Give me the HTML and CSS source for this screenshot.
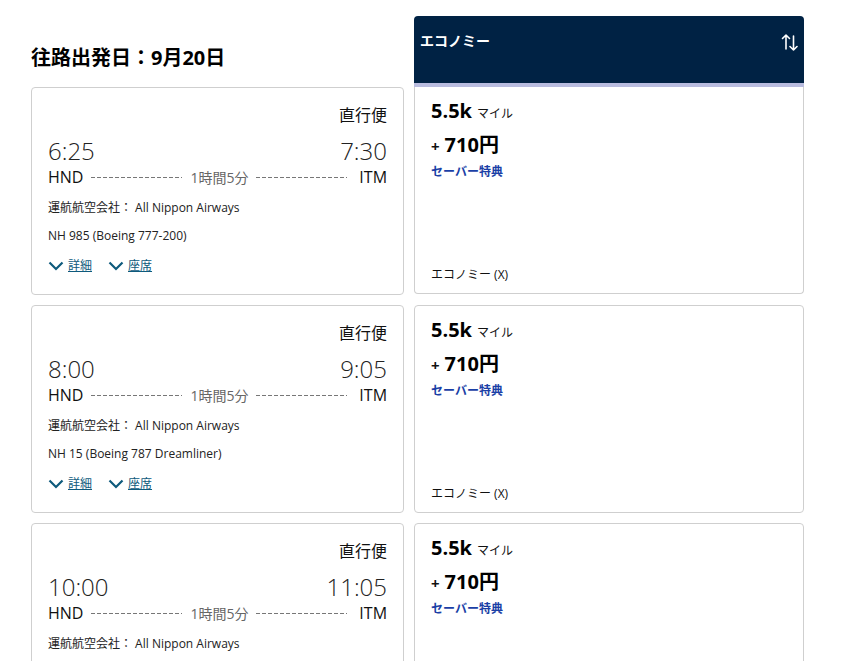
FILE: index.html
```html
<!DOCTYPE html>
<html lang="ja">
<head>
<meta charset="utf-8">
<title>往路出発日</title>
<link rel="stylesheet" href="styles.css">
</head>
<body>
<div class="page">
  <div class="row head-row">
    <h1 class="title">往路出発日：9月20日</h1>
    <div class="cabin-head">
      <span class="cabin-name">エコノミー</span>
      <svg class="sort-icon" width="18" height="18" viewBox="0 0 18 18" fill="none" stroke="#fff" stroke-width="1.6" stroke-linecap="round" stroke-linejoin="round">
        <path d="M5 16V2M1.5 5.5L5 2l3.5 3.5"/>
        <path d="M12.5 3v14M9 13.5l3.5 3.5 3.5-3.5"/>
      </svg>
    </div>
  </div>

  <div class="row">
    <div class="card flight">
      <div class="direct">直行便</div>
      <div class="times"><span>6:25</span><span>7:30</span></div>
      <div class="route"><span>HND</span><i class="dash"></i><span class="dur">1時間5分</span><i class="dash"></i><span>ITM</span></div>
      <div class="meta">運航航空会社： All Nippon Airways</div>
      <div class="meta fno">NH 985 (Boeing 777-200)</div>
      <div class="links">
        <a class="link" href="#"><svg class="chev" width="16" height="10" viewBox="0 0 16 10"><path d="M1.5 1.5L8 8l6.5-6.5" fill="none" stroke="#0e5a7c" stroke-width="2.2"/></svg><span>詳細</span></a>
        <a class="link" href="#"><svg class="chev" width="16" height="10" viewBox="0 0 16 10"><path d="M1.5 1.5L8 8l6.5-6.5" fill="none" stroke="#0e5a7c" stroke-width="2.2"/></svg><span>座席</span></a>
      </div>
    </div>
    <div class="card price">
      <div class="miles"><b>5.5k</b><span>マイル</span></div>
      <div class="yen"><span class="plus">+</span><b>710円</b></div>
      <div class="saver">セーバー特典</div>
      <div class="fare">エコノミー (X)</div>
    </div>
  </div>

  <div class="row">
    <div class="card flight">
      <div class="direct">直行便</div>
      <div class="times"><span>8:00</span><span>9:05</span></div>
      <div class="route"><span>HND</span><i class="dash"></i><span class="dur">1時間5分</span><i class="dash"></i><span>ITM</span></div>
      <div class="meta">運航航空会社： All Nippon Airways</div>
      <div class="meta fno">NH 15 (Boeing 787 Dreamliner)</div>
      <div class="links">
        <a class="link" href="#"><svg class="chev" width="16" height="10" viewBox="0 0 16 10"><path d="M1.5 1.5L8 8l6.5-6.5" fill="none" stroke="#0e5a7c" stroke-width="2.2"/></svg><span>詳細</span></a>
        <a class="link" href="#"><svg class="chev" width="16" height="10" viewBox="0 0 16 10"><path d="M1.5 1.5L8 8l6.5-6.5" fill="none" stroke="#0e5a7c" stroke-width="2.2"/></svg><span>座席</span></a>
      </div>
    </div>
    <div class="card price">
      <div class="miles"><b>5.5k</b><span>マイル</span></div>
      <div class="yen"><span class="plus">+</span><b>710円</b></div>
      <div class="saver">セーバー特典</div>
      <div class="fare">エコノミー (X)</div>
    </div>
  </div>

  <div class="row">
    <div class="card flight">
      <div class="direct">直行便</div>
      <div class="times"><span>10:00</span><span>11:05</span></div>
      <div class="route"><span>HND</span><i class="dash"></i><span class="dur">1時間5分</span><i class="dash"></i><span>ITM</span></div>
      <div class="meta">運航航空会社： All Nippon Airways</div>
      <div class="meta fno">NH 17 (Boeing 777-200)</div>
      <div class="links">
        <a class="link" href="#"><svg class="chev" width="16" height="10" viewBox="0 0 16 10"><path d="M1.5 1.5L8 8l6.5-6.5" fill="none" stroke="#0e5a7c" stroke-width="2.2"/></svg><span>詳細</span></a>
        <a class="link" href="#"><svg class="chev" width="16" height="10" viewBox="0 0 16 10"><path d="M1.5 1.5L8 8l6.5-6.5" fill="none" stroke="#0e5a7c" stroke-width="2.2"/></svg><span>座席</span></a>
      </div>
    </div>
    <div class="card price">
      <div class="miles"><b>5.5k</b><span>マイル</span></div>
      <div class="yen"><span class="plus">+</span><b>710円</b></div>
      <div class="saver">セーバー特典</div>
      <div class="fare">エコノミー (X)</div>
    </div>
  </div>
</div>
</body>
</html>
```
FILE: styles.css
```css
html { overflow: hidden; }
body {
  margin: 0;
  background: #fff;
  color: #111;
  font-family: "Open Sans", "Noto Sans CJK JP", sans-serif;
}
.page {
  padding: 16px 0 0 31px;
  display: flex;
  flex-direction: column;
  gap: 10px;
}
.row {
  display: grid;
  grid-template-columns: 373px 390px;
  column-gap: 10px;
}
.head-row { margin-bottom: -10px; }
.title {
  align-self: end;
  margin: 0 0 14px;
  font-size: 20px;
  line-height: 30px;
  font-weight: 700;
  color: #000;
}
.cabin-head {
  background: #002244;
  border-bottom: 4px solid #b9bcdf;
  border-radius: 4px 4px 0 0;
  display: flex;
  justify-content: space-between;
  align-items: flex-start;
  padding: 15px 5px 0 6px;
  box-sizing: content-box;
  height: 52px;
}
.cabin-name {
  color: #fff;
  font-weight: 700;
  font-size: 14px;
  line-height: 20px;
}
.sort-icon { margin-top: 2px; }
.card {
  height: 208px;
  box-sizing: border-box;
  border: 1px solid #cfcfcf;
  border-radius: 4px;
  display: flex;
  flex-direction: column;
}
.head-row + .row .price { border-top-left-radius: 0; border-top-right-radius: 0; border-top: 0; height: 207px; }
.flight { padding: 15px 16px 0 16px; }
.direct {
  text-align: right;
  font-size: 16px;
  line-height: 24px;
}
.times {
  margin-top: 8px;
  display: flex;
  justify-content: space-between;
  font-size: 24px;
  font-weight: 300;
  line-height: 32px;
  color: #222;
}
.route {
  display: flex;
  align-items: center;
  font-size: 16px;
  line-height: 21px;
}
.dash {
  flex: 1;
  height: 1px;
  margin: 0 8px;
  background: repeating-linear-gradient(to right, #777 0 4px, transparent 4px 6px);
}
.dash:last-of-type { margin-right: 12px; }
.dur { font-size: 14px; color: #666; }
.meta {
  margin-top: 11px;
  font-size: 12px;
  line-height: 18px;
  color: #222;
}
.meta.fno { margin-top: 10px; }
.links {
  margin-top: 12px;
  display: flex;
  gap: 16px;
  font-size: 12px;
  line-height: 18px;
}
.link {
  display: flex;
  align-items: center;
  gap: 4px;
  color: #0e5a7c;
  text-decoration: underline;
}
.price { padding: 12px 16px 9px 16px; }
.miles {
  display: flex;
  align-items: baseline;
  gap: 5px;
  line-height: 24px;
}
.miles b { font-size: 20px; font-weight: 700; color: #000; }
.miles span { font-size: 12px; }
.yen {
  margin-top: 5px;
  display: flex;
  align-items: baseline;
  gap: 5px;
  line-height: 28px;
}
.plus { font-size: 15px; font-weight: 700; }
.yen b { font-size: 20px; font-weight: 700; color: #000; }
.saver {
  margin-top: 3px;
  font-size: 12px;
  line-height: 18px;
  font-weight: 700;
  color: #1b3fa6;
}
.fare {
  margin-top: auto;
  font-size: 12px;
  line-height: 18px;
}
```
